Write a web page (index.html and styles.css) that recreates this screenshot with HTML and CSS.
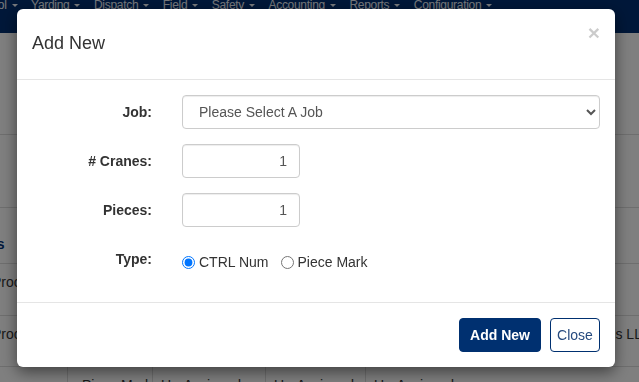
FILE: index.html
```html
<!DOCTYPE html>
<html lang="en">
<head>
<meta charset="utf-8">
<title>Add New</title>
<link rel="stylesheet" href="styles.css">
</head>
<body>
<div class="page">
  <nav class="navbar">
    <ul class="nav">
      <li>Control<span class="caret"></span></li>
      <li>Yarding<span class="caret"></span></li>
      <li>Dispatch<span class="caret"></span></li>
      <li>Field<span class="caret"></span></li>
      <li>Safety<span class="caret"></span></li>
      <li>Accounting<span class="caret"></span></li>
      <li>Reports<span class="caret"></span></li>
      <li>Configuration<span class="caret"></span></li>
    </ul>
  </nav>
  <div class="content">
    <div class="band band-top"></div>
    <div class="band band-mid"></div>
    <div class="trow thead"><div class="cell c1">Items</div></div>
    <div class="trow"><div class="cell c1">Procurement</div><div class="cell"></div><div class="cell"></div><div class="cell"></div><div class="cell"></div><div class="cell"></div></div>
    <div class="trow trow-b"><div class="cell c1">Procurement</div><div class="cell"></div><div class="cell"></div><div class="cell"></div><div class="cell"></div><div class="cell c6">Rentals LLC</div></div>
    <div class="trow tlast"><div class="cell c1">Column</div><div class="cell lined c2">Piece Mark</div><div class="cell lined">Un-Assigned</div><div class="cell lined">Un-Assigned</div><div class="cell lined">Un-Assigned</div><div class="cell"></div></div>
  </div>
</div>

<div class="backdrop"></div>

<div class="modal" role="dialog">
  <div class="modal-header">
    <h4 class="modal-title">Add New</h4>
    <button class="close" type="button">&times;</button>
  </div>
  <form class="modal-body">
    <label class="control-label" for="job">Job:</label>
    <select id="job" class="form-control select">
      <option>Please Select A Job</option>
    </select>

    <label class="control-label" for="cranes"># Cranes:</label>
    <div><input id="cranes" class="form-control num" type="text" value="1"></div>

    <label class="control-label" for="pieces">Pieces:</label>
    <div><input id="pieces" class="form-control num" type="text" value="1"></div>

    <span class="control-label">Type:</span>
    <div class="radios">
      <label class="radio-inline"><input type="radio" name="type" checked>CTRL Num</label>
      <label class="radio-inline"><input type="radio" name="type">Piece Mark</label>
    </div>
  </form>
  <div class="modal-footer">
    <button class="btn btn-primary" type="button">Add New</button>
    <button class="btn btn-default" type="button">Close</button>
  </div>
</div>
</body>
</html>
```

FILE: styles.css
```css
* { box-sizing: border-box; }

html, body {
  margin: 0;
  padding: 0;
  width: 639px;
  height: 382px;
  overflow: hidden;
  background: #fff;
  font-family: "Liberation Sans", Arial, sans-serif;
  font-size: 14px;
  color: #333;
}

/* ---------- page behind the modal ---------- */
.navbar {
  background: #002f72;
  height: 33px;
  padding-top: 1px;
  overflow: hidden;
}
.nav {
  list-style: none;
  margin: 0 0 0 -30px;
  padding: 0;
  display: flex;
  gap: 13.5px;
  font-size: 12px;
  letter-spacing: -0.3px;
  line-height: 8px;
  color: #eef2f8;
  white-space: nowrap;
}
.nav li { display: flex; align-items: center; }
.caret {
  display: inline-block;
  width: 0;
  height: 0;
  margin-left: 5px;
  margin-top: 1px;
  border-top: 3px solid currentColor;
  border-left: 3px solid transparent;
  border-right: 3px solid transparent;
}

.band { border-bottom: 1px solid #ddd; }
.band-top { height: 102px; }
.band-mid { height: 73px; }

.trow {
  display: grid;
  grid-template-columns: 67px 85px 113px 100px 210px 1fr;
  border-bottom: 1px solid #ddd;
  height: 52px;
  white-space: nowrap;
}
.thead { height: 56px; }
.trow-b { height: 51px; }
.tlast { border-bottom: 0; height: 30px; }

.cell {
  padding: 8px 8px 0;
  line-height: 20px;
}
.c1 { padding-left: 0; text-indent: -8px; }
.thead .c1 {
  padding-top: 26px;
  text-indent: -32px;
  font-weight: bold;
  color: #003278;
}
.c2 { padding-left: 14px; }
.c6 { padding-left: 0; }
.lined { border-left: 1px solid #ddd; }
.tlast .c1 { text-indent: -40px; }

/* ---------- backdrop ---------- */
.backdrop {
  position: fixed;
  top: 0;
  left: 0;
  width: 639px;
  height: 382px;
  z-index: 10;
  background: rgba(0, 0, 0, 0.5);
}

/* ---------- modal ---------- */
.modal {
  position: fixed;
  left: 17px;
  top: 9px;
  z-index: 20;
  width: 598px;
  background: #fff;
  border-radius: 6px;
  box-shadow: 0 5px 15px rgba(0, 0, 0, 0.5);
}

.modal-header {
  height: 71px;
  padding: 15px;
  border-bottom: 1px solid #e5e5e5;
  display: flex;
  justify-content: space-between;
  align-items: flex-start;
}
.modal-title {
  margin: 9px 0 0;
  font-size: 18px;
  line-height: 20px;
  font-weight: normal;
  color: #333;
}
.close {
  margin-top: -2px;
  padding: 0;
  border: 0;
  background: transparent;
  font-family: "Liberation Sans", Arial, sans-serif;
  font-size: 21px;
  font-weight: bold;
  line-height: 1;
  color: #000;
  opacity: 0.2;
}

.modal-body {
  margin: 0;
  padding: 15px 15px 26px;
  display: grid;
  grid-template-columns: 120px 1fr;
  column-gap: 30px;
  row-gap: 15px;
  grid-auto-rows: 34px;
}
.control-label {
  text-align: right;
  font-weight: bold;
  padding-top: 7px;
  line-height: 20px;
  color: #333;
}
.form-control {
  height: 34px;
  border: 1px solid #ccc;
  border-radius: 4px;
  background: #fff;
  font-family: "Liberation Sans", Arial, sans-serif;
  font-size: 14px;
  color: #555;
  padding: 6px 12px;
  box-shadow: inset 0 1px 1px rgba(0, 0, 0, 0.075);
}
.select { width: 100%; }
.num {
  width: 118px;
  text-align: right;
  display: block;
}

.radios {
  display: flex;
  gap: 12px;
  padding-top: 10px;
}
.radio-inline {
  display: flex;
  align-items: center;
  height: 20px;
  line-height: 20px;
  color: #333;
}
.radio-inline input {
  width: 13px;
  height: 13px;
  margin: 0 4px 0 0;
}

.modal-footer {
  border-top: 1px solid #e5e5e5;
  padding: 15px;
  display: flex;
  justify-content: flex-end;
  gap: 9px;
}
.btn {
  height: 34px;
  border-radius: 4px;
  font-family: "Liberation Sans", Arial, sans-serif;
  font-size: 14px;
  padding: 0;
  text-align: center;
}
.btn-primary {
  width: 82px;
  background: #003070;
  border: 1px solid #003070;
  color: #fff;
  font-weight: bold;
}
.btn-default {
  width: 50px;
  background: #fff;
  border: 1px solid #003070;
  color: #264a7e;
}
```
